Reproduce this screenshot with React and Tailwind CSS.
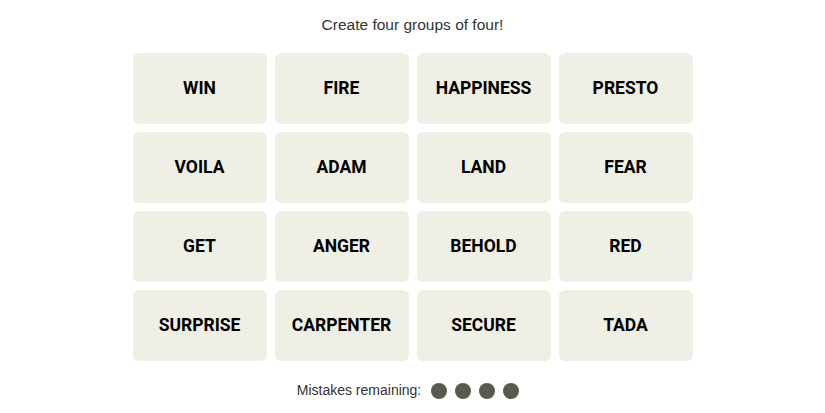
import React from 'react';

const words = [
  'WIN', 'FIRE', 'HAPPINESS', 'PRESTO',
  'VOILA', 'ADAM', 'LAND', 'FEAR',
  'GET', 'ANGER', 'BEHOLD', 'RED',
  'SURPRISE', 'CARPENTER', 'SECURE', 'TADA',
];

const App = () => {
  return (
    <div className="w-[825px] h-[413px] bg-white flex flex-col items-center font-['Liberation_Sans',sans-serif]">
      <p className="mt-[15px] h-[20px] text-[15.5px] leading-[20px] text-[#333333]">Create four groups of four!</p>

      <div className="mt-[18px] grid grid-cols-[repeat(4,134px)] auto-rows-[71px] gap-[8px]">
        {words.map((w) => (
          <div
            key={w}
            className="bg-[#efefe6] rounded-[6px] flex items-center justify-center font-['Roboto',sans-serif] font-bold text-[17.5px] text-black"
          >
            {w}
          </div>
        ))}
      </div>

      <div className="mt-[19px] mr-[9px] flex items-center">
        <span className="text-[14px] text-[#333333]">Mistakes remaining:</span>
        <div className="ml-[10px] flex gap-[8px]">
          <span className="w-[16px] h-[16px] rounded-full bg-[#5a594e]" />
          <span className="w-[16px] h-[16px] rounded-full bg-[#5a594e]" />
          <span className="w-[16px] h-[16px] rounded-full bg-[#5a594e]" />
          <span className="w-[16px] h-[16px] rounded-full bg-[#5a594e]" />
        </div>
      </div>
    </div>
  );
};

export default App;
